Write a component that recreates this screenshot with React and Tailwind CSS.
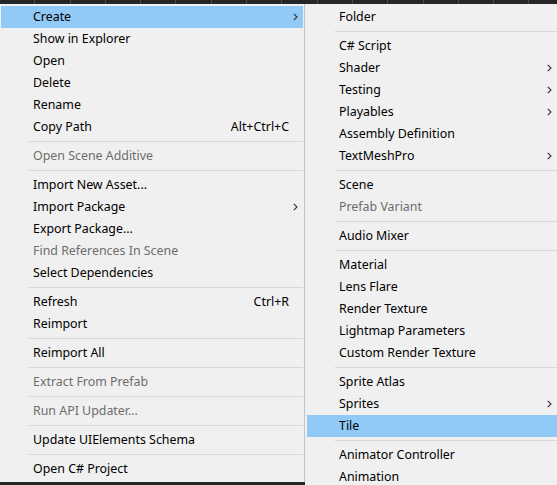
const leftItems = [
  { label: 'Create', arrow: true, active: true },
  { label: 'Show in Explorer' },
  { label: 'Open' },
  { label: 'Delete' },
  { label: 'Rename' },
  { label: 'Copy Path', shortcut: 'Alt+Ctrl+C' },
  { sep: true },
  { label: 'Open Scene Additive', disabled: true },
  { sep: true },
  { label: 'Import New Asset...' },
  { label: 'Import Package', arrow: true },
  { label: 'Export Package...' },
  { label: 'Find References In Scene', disabled: true },
  { label: 'Select Dependencies' },
  { sep: true },
  { label: 'Refresh', shortcut: 'Ctrl+R' },
  { label: 'Reimport' },
  { sep: true },
  { label: 'Reimport All' },
  { sep: true },
  { label: 'Extract From Prefab', disabled: true },
  { sep: true },
  { label: 'Run API Updater...', disabled: true },
  { sep: true },
  { label: 'Update UIElements Schema' },
  { sep: true },
  { label: 'Open C# Project' },
]

const rightItems = [
  { label: 'Folder' },
  { sep: true },
  { label: 'C# Script' },
  { label: 'Shader', arrow: true },
  { label: 'Testing', arrow: true },
  { label: 'Playables', arrow: true },
  { label: 'Assembly Definition' },
  { label: 'TextMeshPro', arrow: true },
  { sep: true },
  { label: 'Scene' },
  { label: 'Prefab Variant', disabled: true },
  { sep: true },
  { label: 'Audio Mixer' },
  { sep: true },
  { label: 'Material' },
  { label: 'Lens Flare' },
  { label: 'Render Texture' },
  { label: 'Lightmap Parameters' },
  { label: 'Custom Render Texture' },
  { sep: true },
  { label: 'Sprite Atlas' },
  { label: 'Sprites', arrow: true },
  { label: 'Tile', active: true },
  { sep: true },
  { label: 'Animator Controller' },
  { label: 'Animation' },
]

function Chevron() {
  return (
    <svg width="5" height="8" viewBox="0 0 5 8" className="shrink-0">
      <polyline points="0.8,0.8 4,4 0.8,7.2" fill="none" stroke="#333" strokeWidth="1.1" />
    </svg>
  )
}

function MenuRow({ item }) {
  if (item.sep) {
    return (
      <div className="flex h-[7px] items-center pl-[28px]">
        <div className="h-px w-full bg-[#d7d7d7]" />
      </div>
    )
  }
  return (
    <div
      className={`flex h-[22px] items-center pl-[32px] pr-[5px] ${
        item.active ? 'bg-[#91c9f7]' : ''
      } ${item.disabled ? 'text-[#6d6d6d]' : 'text-[#000]'}`}
    >
      <span className="flex-1 whitespace-nowrap">{item.label}</span>
      {item.shortcut && <span className="mr-[9px] whitespace-nowrap">{item.shortcut}</span>}
      {item.arrow && <Chevron />}
    </div>
  )
}

export default function App() {
  return (
    <div
      className="flex h-[485px] w-[557px] flex-col overflow-hidden bg-[#262626] text-[12.4px] leading-none"
      style={{ fontFamily: '"Noto Sans", "Liberation Sans", sans-serif' }}
    >
      <div className="flex h-[4px] shrink-0">
        {Array.from({ length: 16 }).map((_, i) => (
          <div key={i} className="h-full w-[35.3px] shrink-0 border-r border-[#4a4a4a]" />
        ))}
      </div>
      <div className="flex flex-1 items-start">
        <div className="flex h-[478px] w-[305px] shrink-0 flex-col border-r border-[#c4c4c4] bg-[#f0f0f0] px-px pt-[2px]">
          {leftItems.map((item, i) => (
            <MenuRow key={i} item={item} />
          ))}
        </div>
        <div className="flex h-full flex-1 flex-col bg-[#f0f0f0] pl-[2px] pt-[2px]">
          {rightItems.map((item, i) => (
            <MenuRow key={i} item={item} />
          ))}
        </div>
      </div>
    </div>
  )
}
